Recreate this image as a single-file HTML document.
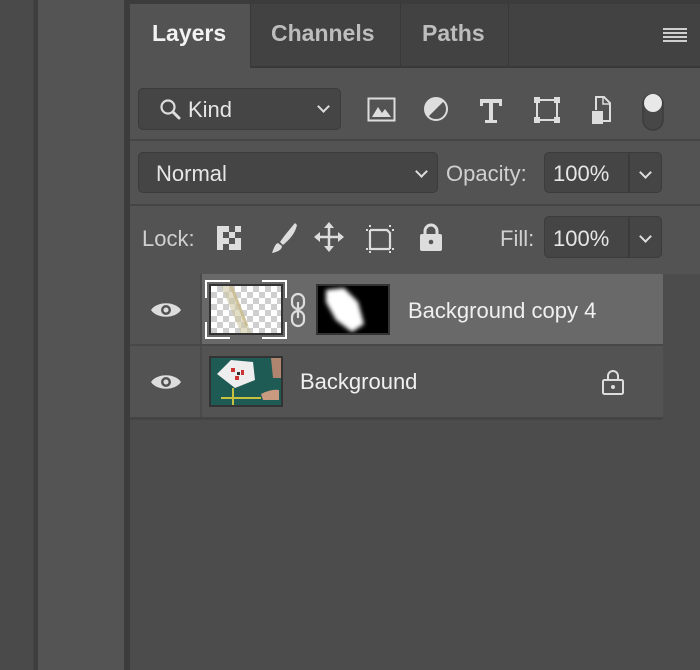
<!DOCTYPE html>
<html><head><style>
*{margin:0;padding:0;box-sizing:border-box}
body{width:700px;height:670px;background:#4c4c4c;position:relative;overflow:hidden;font-family:"Liberation Sans",sans-serif;color:#e6e6e6}
.a{position:absolute}
.box{position:absolute;background:#454545;border:1.5px solid #3b3b3b;border-radius:5px}
.t{position:absolute;font-size:22px;white-space:nowrap}
.chev{position:absolute;width:9px;height:9px;border-right:2px solid #ddd;border-bottom:2px solid #ddd;transform:rotate(45deg)}
</style></head><body>
<div class="a" style="left:0;top:0;width:33px;height:670px;background:#4a4a4a"></div>
<div class="a" style="left:33px;top:0;width:5px;height:670px;background:#3e3e3e;border-left:1px solid #444;"></div>
<div class="a" style="left:38px;top:0;width:86px;height:670px;background:#545454"></div>
<div class="a" style="left:124px;top:0;width:6px;height:670px;background:#3c3c3c"></div>
<div class="a" style="left:130px;top:0;width:570px;height:4px;background:#3c3c3c"></div>
<div class="a" style="left:130px;top:4px;width:570px;height:63px;background:#424242"></div>
<div class="a" style="left:130px;top:4px;width:120px;height:64px;background:#535353"></div>
<div class="a" style="left:250px;top:4px;width:1px;height:63px;background:#383838"></div>
<div class="a" style="left:400px;top:4px;width:1px;height:63px;background:#383838"></div>
<div class="a" style="left:508px;top:4px;width:1px;height:63px;background:#383838"></div>
<div class="a" style="left:250px;top:66px;width:450px;height:2px;background:#383838"></div>
<div class="t" style="left:152px;top:20px;font-weight:bold;color:#f2f2f2;font-size:23px">Layers</div>
<div class="t" style="left:271px;top:20px;font-weight:bold;color:#bdbdbd;font-size:23px">Channels</div>
<div class="t" style="left:422px;top:20px;font-weight:bold;color:#bdbdbd;font-size:23px">Paths</div>
<div class="a" style="left:663px;top:28px;width:24px;height:14px;background:repeating-linear-gradient(#cfcfcf 0 2px,transparent 2px 4px)"></div>
<div class="a" style="left:130px;top:68px;width:570px;height:206px;background:#535353"></div>
<div class="a" style="left:130px;top:139px;width:570px;height:2px;background:#454545"></div>
<div class="a" style="left:130px;top:204px;width:570px;height:2px;background:#454545"></div>
<div class="box" style="left:138px;top:88px;width:203px;height:42px"></div>
<svg class="a" style="left:158px;top:97px" width="26" height="26" viewBox="0 0 26 26"><circle cx="10" cy="10" r="6.5" fill="none" stroke="#ddd" stroke-width="2.2"/><path d="M15 15l6 6" stroke="#ddd" stroke-width="3" stroke-linecap="round"/></svg>
<div class="t" style="left:188px;top:97px">Kind</div>
<div class="chev" style="left:319px;top:102px"></div>
<svg class="a" style="left:366px;top:94px" width="300" height="40" viewBox="0 0 300 40">
<rect x="2.5" y="4.5" width="26" height="22" fill="none" stroke="#ddd" stroke-width="2"/><path d="M6 23l6-10 4 6 3-4 6 8z" fill="#ddd"/>
<circle cx="70" cy="15" r="11" fill="none" stroke="#ddd" stroke-width="2"/><path d="M62 23A11 11 0 0 1 78 7z" fill="#ddd"/>
<path d="M114 5h22v7h-3v-3h-6v17h4v3h-12v-3h4v-17h-6v3h-3z" fill="#ddd"/>
<rect x="171" y="6" width="20" height="20" fill="none" stroke="#ddd" stroke-width="2"/><rect x="168" y="3" width="6" height="6" fill="#ddd"/><rect x="188" y="3" width="6" height="6" fill="#ddd"/><rect x="168" y="23" width="6" height="6" fill="#ddd"/><rect x="188" y="23" width="6" height="6" fill="#ddd"/>
<path d="M230 16V3h8l6 6v18h-7" fill="none" stroke="#ddd" stroke-width="2"/><path d="M237 3v7h7" fill="none" stroke="#ddd" stroke-width="1.5"/><rect x="226" y="17" width="11" height="13" fill="#ddd"/>
<rect x="277" y="0" width="20" height="36" rx="10" fill="#474747" stroke="#3c3c3c" stroke-width="1.5"/><circle cx="287" cy="9" r="9" fill="#e8e8e8"/>
</svg>
<div class="box" style="left:138px;top:152px;width:300px;height:41px"></div>
<div class="t" style="left:156px;top:161px">Normal</div>
<div class="chev" style="left:417px;top:167px"></div>
<div class="t" style="left:446px;top:161px;color:#d0d0d0">Opacity:</div>
<div class="box" style="left:544px;top:152px;width:118px;height:41px"></div>
<div class="a" style="left:628px;top:152px;width:1.5px;height:41px;background:#3b3b3b"></div>
<div class="t" style="left:553px;top:161px">100%</div>
<div class="chev" style="left:641px;top:168px"></div>
<div class="t" style="left:142px;top:226px;color:#d0d0d0">Lock:</div>
<svg class="a" style="left:215px;top:220px" width="240" height="36" viewBox="0 0 240 36">
<rect x="2" y="6" width="24" height="24" fill="#ddd"/><path d="M8 12h6v6h-6zM20 12h6v6h-6zM14 18h6v6h-6zM2 24h0zM8 24h6v6h-6zM14 6h6v6h-6z" fill="#555"/>
<path d="M80 3c-5 6-11 13-15 19l3 3c6-5 12-11 14-20z" fill="#ddd"/><path d="M63 23c-3 1-4 5-6 10 5-1 10-3 10-7z" fill="#ddd"/>
<path d="M114 4v26M101 17h26" stroke="#ddd" stroke-width="2.5"/><path d="M114 2l-5 6h10zM114 32l-5-6h10zM99 17l6-5v10zM129 17l-6-5v10z" fill="#ddd"/>
<path d="M155 10h17l3 3v16M155 10v19h20" fill="none" stroke="#ddd" stroke-width="2.2"/><path d="M151 10h2M155 5v2M175 5v2M179 10h-2M151 29h2M179 29h-2M155 33v-2M175 33v-2" stroke="#ddd" stroke-width="2"/>
<path d="M210 15v-4a6 6 0 0 1 12 0v4" fill="none" stroke="#ddd" stroke-width="3"/><rect x="205" y="14" width="22" height="17" rx="2" fill="#ddd"/><circle cx="216" cy="22" r="2.3" fill="#555"/>
</svg>
<div class="t" style="left:500px;top:226px;color:#d0d0d0">Fill:</div>
<div class="box" style="left:544px;top:216px;width:118px;height:42px"></div>
<div class="a" style="left:628px;top:216px;width:1.5px;height:42px;background:#3b3b3b"></div>
<div class="t" style="left:553px;top:226px">100%</div>
<div class="chev" style="left:641px;top:232px"></div>
<div class="a" style="left:130px;top:274px;width:533px;height:144px;background:#535353"></div>
<div class="a" style="left:200px;top:274px;width:2px;height:144px;background:#4a4a4a"></div>
<div class="a" style="left:202px;top:274px;width:461px;height:70px;background:#696969"></div>
<div class="a" style="left:130px;top:344px;width:533px;height:2px;background:#484848"></div>
<div class="a" style="left:130px;top:417px;width:533px;height:3px;background:#444"></div>
<svg class="a" style="left:150px;top:300px" width="32" height="20" viewBox="0 0 32 20"><path d="M1 10C7 1 25 1 31 10 25 19 7 19 1 10z" fill="#ddd"/><circle cx="16" cy="10" r="5" fill="#535353"/><circle cx="16" cy="10" r="2.5" fill="#ddd"/></svg>
<svg class="a" style="left:150px;top:372px" width="32" height="20" viewBox="0 0 32 20"><path d="M1 10C7 1 25 1 31 10 25 19 7 19 1 10z" fill="#ddd"/><circle cx="16" cy="10" r="5" fill="#535353"/><circle cx="16" cy="10" r="2.5" fill="#ddd"/></svg>
<div class="a" style="left:205px;top:280px;width:82px;height:59px;border:2px solid #fff"></div>
<div class="a" style="left:230px;top:278px;width:32px;height:63px;background:#696969"></div>
<div class="a" style="left:203px;top:298px;width:6px;height:24px;background:#696969"></div>
<div class="a" style="left:284px;top:298px;width:6px;height:24px;background:#696969"></div>
<div class="a" style="left:209px;top:284px;width:74px;height:51px;border:2px solid #333;background:#fff;background-image:repeating-conic-gradient(#cfcfcf 0 25%,#fff 0 50%);background-size:12px 12px"></div>
<svg class="a" style="left:211px;top:286px" width="70" height="47"><path d="M10 0l20 47h10L22 0z" fill="#cfc6a0" opacity=".6"/><path d="M20 0l16 40" stroke="#c9b98a" stroke-width="3" opacity=".7"/></svg>
<svg class="a" style="left:289px;top:292px" width="18" height="36" viewBox="0 0 18 36"><rect x="3" y="2" width="12" height="15" rx="6" fill="none" stroke="#ddd" stroke-width="2.2"/><rect x="3" y="19" width="12" height="15" rx="6" fill="none" stroke="#ddd" stroke-width="2.2"/><path d="M9 10v16" stroke="#ddd" stroke-width="2.2"/></svg>
<div class="a" style="left:316px;top:284px;width:74px;height:51px;border:2px solid #333;background:#000"></div>
<svg class="a" style="left:318px;top:286px" width="70" height="47"><defs><filter id="b"><feGaussianBlur stdDeviation="2"/></filter></defs><path d="M8 4l18-2 14 14 6 22-12 8-16-12-10-18z" fill="#fff" filter="url(#b)"/></svg>
<div class="t" style="left:408px;top:298px;color:#f0f0f0">Background copy 4</div>
<div class="a" style="left:209px;top:356px;width:74px;height:51px;border:2px solid #333;background:#1f5b55"></div>
<svg class="a" style="left:211px;top:358px" width="70" height="47"><path d="M6 16l14-14 22 2 2 18-20 8z" fill="#eee"/><path d="M20 10h4v4h-4zM30 12h3v5h-3zM24 18h4v4h-4z" fill="#c33"/><path d="M26 14h3v3h-3z" fill="#333"/><path d="M10 40h40M22 30v17" stroke="#c8c040" stroke-width="2"/><path d="M50 36c6-3 12-5 18-4v10H52z" fill="#c99a80"/><path d="M60 0h10v20h-8z" fill="#b08570"/></svg>
<div class="t" style="left:300px;top:369px;color:#f0f0f0">Background</div>
<svg class="a" style="left:600px;top:368px" width="26" height="28" viewBox="0 0 26 28"><path d="M8 12V8a5 5 0 0 1 10 0v4" fill="none" stroke="#ddd" stroke-width="2"/><rect x="3" y="12" width="20" height="14" rx="1.5" fill="none" stroke="#ddd" stroke-width="2"/><circle cx="13" cy="19" r="2" fill="#ddd"/></svg>
</body></html>
